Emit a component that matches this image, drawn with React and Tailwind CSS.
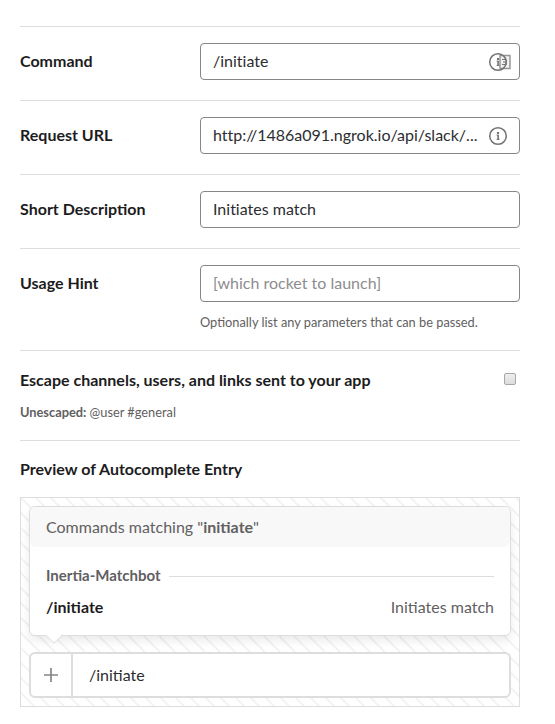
import React from "react";

const inputClass =
  "flex h-[37px] w-80 items-center justify-between rounded-[4px] border border-[#868686] pl-3 pr-[11px] text-[16px] leading-[24px] text-[#2c2d30] [font-variant-ligatures:none]";

function InfoIcon() {
  return (
    <svg width="20" height="20" viewBox="0 0 20 20" fill="none" className="shrink-0">
      <circle cx="10" cy="10" r="8.3" stroke="#717274" strokeWidth="1.5" />
      <rect x="9" y="6" width="2" height="2" fill="#717274" />
      <path d="M8.6 9.2H10M8.6 13.4H11.6" stroke="#717274" strokeWidth="1" />
      <path d="M10.1 8.8V13.8" stroke="#717274" strokeWidth="1.6" />
    </svg>
  );
}

function Row({ label, children }) {
  return (
    <div className="flex h-[74px] border-t border-[#dddddd] pt-4">
      <div className="w-[180px] pt-[6px] font-bold">{label}</div>
      {children}
    </div>
  );
}

export default function App() {
  return (
    <main className="h-[724px] w-[555px] overflow-hidden bg-white pl-5 pt-[26px] font-[Lato,sans-serif] text-[16px] leading-[24px] text-[#1d1c1d]">
      <div className="w-[500px]">
        <Row label="Command">
          <div className={inputClass}>
            <span className="pb-px">/initiate</span>
            <span className="relative flex">
              <InfoIcon />
              <svg width="12" height="16" viewBox="0 0 12 16" fill="none" className="absolute left-[11px] top-[2px]">
                <rect x="1" y="1.5" width="10" height="13" fill="#777777" fillOpacity=".1" stroke="#777777" strokeOpacity=".75" strokeWidth="1.5" />
                <path d="M3 5.5H7V10.5H3M4 8H7" stroke="#777777" strokeWidth="1.2" />
              </svg>
            </span>
          </div>
        </Row>
        <Row label="Request URL">
          <div className={inputClass}>
            <span className="pb-px">http://1486a091.ngrok.io/api/slack/...</span>
            <InfoIcon />
          </div>
        </Row>
        <Row label="Short Description">
          <div className={inputClass}>
            <span className="pb-px">Initiates match</span>
          </div>
        </Row>
        <div className="flex h-[102px] border-t border-[#dddddd] pt-4">
          <div className="w-[180px] pt-[6px] font-bold">Usage Hint</div>
          <div>
            <div className={inputClass}>
              <span className="pb-px text-[#8d8d8f]">[which rocket to launch]</span>
            </div>
            <p className="mt-[10px] text-[12.8px] leading-[20px] text-[#616061]">Optionally list any parameters that can be passed.</p>
          </div>
        </div>
        <div className="flex h-[90px] justify-between border-t border-[#dddddd] pt-[17px]">
          <div>
            <p className="font-bold">Escape channels, users, and links sent to your app</p>
            <p className="mt-[10px] text-[12.8px] leading-[20px] text-[#616061]">
              <b>Unescaped:</b> @user #general
            </p>
          </div>
          <div className="mr-1 mt-[5px] h-3 w-3 rounded-[2px] border border-[#a8a8a8] bg-linear-to-b from-[#eeeeee] to-[#dcdcdc]" />
        </div>
        <div className="border-t border-[#dddddd] pt-4">
          <h2 className="font-bold">Preview of Autocomplete Entry</h2>
          <div className="mt-4 h-[210px] border border-[#dddddd] bg-[linear-gradient(45deg,#f3f3f3_0%,#f3f3f3_3%,#ffffff_6%,#ffffff_44%,#f3f3f3_47%,#f3f3f3_53%,#ffffff_56%,#ffffff_94%,#f3f3f3_97%,#f3f3f3_100%)] bg-size-[15px_15px] px-2 pt-2">
            <div className="relative h-[130px] rounded-[6px] border border-[#dddddd] bg-white text-[#616061] shadow-[0_5px_10px_rgba(0,0,0,0.08)]">
              <div className="h-[40px] rounded-[6px] bg-[#f8f8f8] px-4 pt-2">
                Commands matching "<b>initiate</b>"
              </div>
              <div className="flex items-center gap-2 px-4 pt-4 text-[15px]">
                <b>Inertia-Matchbot</b>
                <span className="mt-[2px] h-px flex-1 bg-[#dddddd]" />
              </div>
              <div className="flex justify-between px-4 pt-2">
                <b className="text-[#1d1c1d]">/initiate</b>
                <span>Initiates match</span>
              </div>
              <svg width="16" height="9" viewBox="0 0 16 9" className="absolute left-4 top-[128px]">
                <path d="M0 0H16L8 8Z" fill="white" />
                <path d="M0 .5L8 8L16 .5" fill="none" stroke="#dddddd" />
              </svg>
            </div>
            <div className="mt-4 flex h-[46px] rounded-[6px] border-2 border-[#dddddd] bg-white">
              <div className="flex w-[42px] items-center justify-center border-r-2 border-[#dddddd]">
                <svg width="14" height="14" viewBox="0 0 14 14" fill="none" stroke="#868686" strokeWidth="1.7">
                  <path d="M7 0V14M0 7H14" />
                </svg>
              </div>
              <div className="pl-4 pt-[9px] text-[#2c2d30]">/initiate</div>
            </div>
          </div>
        </div>
      </div>
    </main>
  );
}
